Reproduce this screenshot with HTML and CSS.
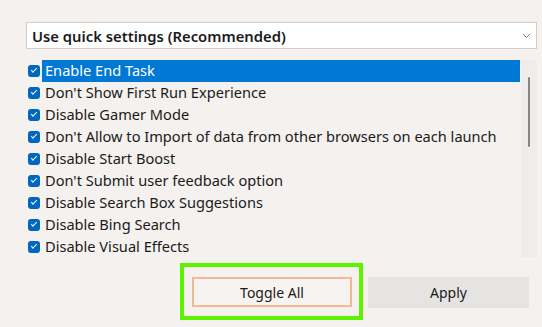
FILE: index.html
```html
<!DOCTYPE html>
<html lang="en">
<head>
  <meta charset="UTF-8">
  <title>Quick settings</title>
  <link rel="stylesheet" href="styles.css">
</head>
<body>
  <div class="panel">
    <!-- preset dropdown -->
    <div class="dropdown">
      <span>Use quick settings (Recommended)</span>
      <svg class="chevron" width="9" height="6" viewBox="0 0 9 6"><polyline points="1,1 4.5,4.5 8,1" fill="none" stroke="#777" stroke-width="1"/></svg>
    </div>

    <!-- tweak list -->
    <div class="list">
      <ul class="items">
        <li class="selected"><span class="check"></span><span class="label">Enable End Task</span></li>
        <li><span class="check"></span><span class="label">Don't Show First Run Experience</span></li>
        <li><span class="check"></span><span class="label">Disable Gamer Mode</span></li>
        <li><span class="check"></span><span class="label">Don't Allow to Import of data from other browsers on each launch</span></li>
        <li><span class="check"></span><span class="label">Disable Start Boost</span></li>
        <li><span class="check"></span><span class="label">Don't Submit user feedback option</span></li>
        <li><span class="check"></span><span class="label">Disable Search Box Suggestions</span></li>
        <li><span class="check"></span><span class="label">Disable Bing Search</span></li>
        <li><span class="check"></span><span class="label">Disable Visual Effects</span></li>
      </ul>
      <div class="scrollbar"><div class="thumb"></div></div>
    </div>

    <div class="actions">
      <div class="highlight">
        <button class="button toggle-button">Toggle All</button>
      </div>
      <button class="button apply-button">Apply</button>
    </div>
  </div>
</body>
</html>
```

FILE: styles.css
```css
body {
  background-color: #f4f1ee;
  font-family: 'Noto Sans', 'Open Sans', sans-serif;
  color: #1b1b1b;
  margin: 0;
  padding: 0;
}
.panel {
  padding: 22px 5px 0 26px;
}
.dropdown {
  height: 27px;
  box-sizing: border-box;
  border: 1px solid #cfcfcf;
  background-color: #fff;
  display: flex;
  align-items: center;
  justify-content: space-between;
  padding: 0 5px 0 5px;
  font-size: 14.8px;
  font-weight: 600;
}
.chevron {
  margin-top: 1px;
}
.list {
  display: flex;
  height: 197px;
  margin-top: 11px;
}
.items {
  list-style-type: none;
  margin: 0;
  padding: 0;
  flex: 1;
}
.items li {
  height: 22px;
  display: flex;
  align-items: center;
  font-size: 14.6px;
}
.check {
  width: 12px;
  height: 12px;
  margin: 0 2px 0 2px;
  border-radius: 3px;
  background-color: #0067c0;
  position: relative;
  flex-shrink: 0;
}
.check::after {
  content: "";
  position: absolute;
  left: 3px;
  top: 3px;
  width: 5px;
  height: 2px;
  border-left: 1px solid #fff;
  border-bottom: 1px solid #fff;
  transform: rotate(-45deg);
}
.label {
  flex: 1;
  height: 22px;
  line-height: 21px;
  padding-left: 3px;
}
.selected .label {
  background-color: #0078d4;
  color: #fff;
}
.scrollbar {
  width: 16px;
  margin-left: 1px;
  background-color: #efedeb;
  position: relative;
}
.thumb {
  position: absolute;
  left: 7px;
  top: 17px;
  width: 2px;
  height: 70px;
  border-radius: 1px;
  background-color: #858585;
}
.actions {
  display: flex;
  justify-content: flex-end;
  align-items: flex-start;
  gap: 5px;
  margin-top: 6px;
  padding-right: 8px;
}
.highlight {
  border: 4px solid #5df200;
  padding: 10px 7px 9px 8px;
}
.button {
  font-family: 'Noto Sans', 'Open Sans', sans-serif;
  font-size: 14px;
  color: #1b1b1b;
  cursor: pointer;
}
.toggle-button {
  width: 160px;
  height: 30px;
  border: 2px solid #f0b894;
  background-color: #f7f3f0;
}
.apply-button {
  width: 161px;
  height: 31px;
  margin-top: 14px;
  border: none;
  background-color: #e5e4e3;
}
```
